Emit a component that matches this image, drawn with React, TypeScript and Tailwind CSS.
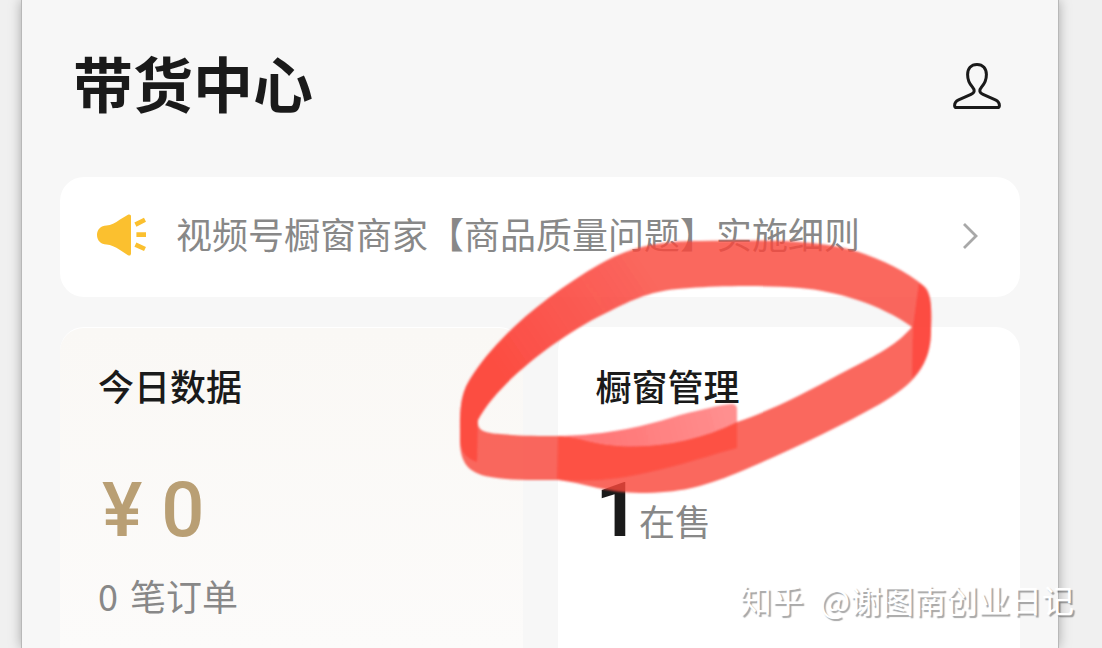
import React from "react";

function PersonIcon() {
  return (
    <svg viewBox="0 0 50 48" className="w-[50px] h-12" fill="none" stroke="#1a1a1a" strokeWidth="3" strokeLinejoin="round">
      <path d="M25 2.4C19 2.4 15.6 6.600 15.600 12.600C15.600 18 17.200 21.600 20.400 25C23 28 23 30.600 19 32.400L6.600 37.800C3.600 39.200 2.600 41 2.600 43.400C2.600 45 3.200 45.600 4.600 45.600H45.400C46.800 45.600 47.400 45 47.400 43.400C47.400 41 46.400 39.200 43.400 37.800L31 32.400C27 30.600 27 28 29.600 25C32.800 21.600 34.400 18 34.400 12.600C34.400 6.600 31 2.400 25 2.400Z" />
    </svg>
  );
}

function HornIcon() {
  return (
    <svg viewBox="0 0 50 42" className="w-[50px] h-[42px] shrink-0" fill="#fbc02f">
      <path d="M10.500 11.500C15 11 19 9 24 5.400L32 0.800C33.600 0 35 0.600 35 2.400V39.600C35 41.400 33.600 42 32 41.200L24 36C19 32.600 15 31 10.500 30.500C5 30.500 1 26.400 1 21C1 15.600 5 11.500 10.500 11.500Z" />
      <g stroke="#fbc02f" strokeWidth="4.600">
        <path d="M39.400 10.600L49 5.800M40.400 20.600H50M39.400 30.600L49 35" />
      </g>
    </svg>
  );
}

// red marker ring drawn around the shop window card title
function MarkerRing() {
  return (
    <svg
      viewBox="450 230 490 270"
      className="absolute -left-[108px] -top-[97px] z-10 w-[490px] h-[270px] max-w-none pointer-events-none"
      aria-hidden="true"
    >
      <defs>
        <linearGradient id="tail" gradientUnits="userSpaceOnUse" x1="600" y1="440" x2="737" y2="405">
          <stop offset="0" stopColor="#ff4a4a" stopOpacity="0.75" />
          <stop offset="1" stopColor="#ff5555" stopOpacity="0.65" />
        </linearGradient>
        <linearGradient id="fade" gradientUnits="userSpaceOnUse" x1="500" y1="370" x2="650" y2="270">
          <stop offset="0" stopColor="#ff3d31" stopOpacity="0.6" />
          <stop offset="1" stopColor="#ff3d31" stopOpacity="0" />
        </linearGradient>
        <filter id="soft" x="-5%" y="-5%" width="110%" height="110%">
          <feGaussianBlur stdDeviation="1" />
        </filter>
      </defs>
      <g filter="url(#soft)">
        <path
          fill="#f9463c"
          fillOpacity="0.82"
          fillRule="evenodd"
          d="M460 428C460 402 462 390 474 373C500 334 548 294 600 264C628 248 656 241 700 241C760 240 812 239 852 250C882 259 906 271 924 286C931 292 932 304 931 330C931 366 914 384 880 404C836 429 780 455 737 473C702 487 680 493 640 493C608 493 584 483 558 480C530 480 508 481 485 476C466 471 460 460 460 440Z
             M478 420C476 432 488 433 500 434C520 436 540 436 557 436C582 437 590 444 620 446C660 448 700 440 737 422C770 411 805 393 840 374C872 357 894 348 912 327C880 304 836 291 800 288C760 285 720 286 690 288C655 290 640 296 610 311C570 329 500 378 478 420Z"
        />
        <path fill="url(#tail)" d="M557 436C610 435 645 426 680 415C704 409 720 405 731 404Q737 404 737 409V422C700 440 660 448 620 446C590 444 582 437 557 436Z" />
        <path fill="#ff4437" fillOpacity="0.62" d="M558 436C582 437 590 444 620 446C660 448 700 440 737 422V448C700 458 650 476 600 480Q570 482 557 479Z" />
        <path
          fill="url(#fade)"
          d="M460 428C460 402 462 390 474 373C500 334 548 294 600 264Q630 247 660 243V291C640 296 630 301 610 311C570 329 500 378 478 420L477 462C464 458 460 448 460 440Z"
        />
        <path fill="#ff3126" fillOpacity="0.5" d="M919 283C931 292 932 304 931 330C931 352 925 364 912 378L913 327Z" />
      </g>
    </svg>
  );
}

export default function App() {
  return (
    <div className="relative min-h-screen overflow-hidden bg-[#f0f0f0] pl-[22px] pr-11 text-[#1a1a1a] font-['Noto_Sans_CJK_SC',sans-serif]">
      <main className="flex min-h-screen flex-col bg-[#f7f7f7] px-[38px] shadow-[0_0_0_1px_#b8b8b8,0_0_12px_rgba(0,0,0,0.35)]">
        <header className="flex items-center justify-between pt-[37px] pb-[50px] pl-[13px] pr-[18px]">
          <h1 className="text-[60px] leading-[90px] font-bold">带货中心</h1>
          <button type="button" aria-label="个人中心" className="pt-2">
            <PersonIcon />
          </button>
        </header>

        <a href="#notice" className="flex h-[120px] items-center rounded-3xl bg-white pb-1 pl-9 pr-[41px]">
          <HornIcon />
          <span className="ml-[30px] flex-1 whitespace-nowrap pb-1 text-[36px] leading-[54px] text-[#888888]">
            视频号橱窗商家【商品质量问题】实施细则
          </span>
          <svg viewBox="0 0 18 28" className="w-[18px] h-7 shrink-0" fill="none" stroke="#a8a8a8" strokeWidth="2.800">
            <path d="M3 3L15 15L3 27" />
          </svg>
        </a>

        <div className="mt-[30px] grid flex-1 grid-cols-2 gap-[35px]">
          <section className="rounded-t-3xl border-t border-white bg-linear-to-b from-[#faf8f5] to-[#fcfbfa] px-[38px] pt-[30px]">
            <h2 className="text-[36px] leading-[54px] font-medium">今日数据</h2>
            <p className="mt-11 pl-1 text-[76px] leading-[108px] font-medium text-[#b99f74] font-['Roboto',sans-serif]">¥ 0</p>
            <p className="mt-1 flex gap-3 text-[36px] leading-[54px] text-[#888888]">
              <span>0</span>
              <span>笔订单</span>
            </p>
          </section>

          <section className="relative rounded-t-3xl bg-white px-[38px] pt-[31px]">
            <h2 className="text-[36px] leading-[54px] font-medium">橱窗管理</h2>
            <p className="mt-11 flex items-baseline">
              <span className="text-[76px] leading-[108px] font-bold font-['Roboto',sans-serif]">1</span>
              <span className="text-[36px] leading-[54px] text-[#888888]">在售</span>
            </p>
            <MarkerRing />
          </section>
        </div>
      </main>

      <div className="absolute bottom-[25px] right-7 z-20 flex gap-4 text-[32px] leading-[48px] text-white [text-shadow:2px_2px_1px_rgba(0,0,0,0.35)]">
        <span>知乎</span>
        <span>@谢图南创业日记</span>
      </div>
    </div>
  );
}
